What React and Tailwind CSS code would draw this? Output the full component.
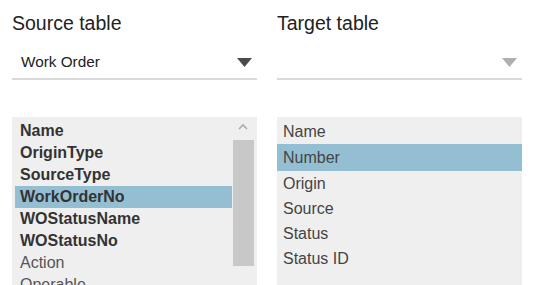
import React from 'react';

const sourceFields = [
  { name: 'Name', bold: true },
  { name: 'OriginType', bold: true },
  { name: 'SourceType', bold: true },
  { name: 'WorkOrderNo', bold: true, selected: true },
  { name: 'WOStatusName', bold: true },
  { name: 'WOStatusNo', bold: true },
  { name: 'Action' },
  { name: 'Operable' },
  { name: 'Priority' },
];

const targetFields = [
  { name: 'Name' },
  { name: 'Number', selected: true },
  { name: 'Origin' },
  { name: 'Source' },
  { name: 'Status' },
  { name: 'Status ID' },
];

function Caret({ light }) {
  return (
    <svg width="15" height="9" viewBox="0 0 15 9" className="shrink-0">
      <polygon points="0,0 15,0 7.5,9" fill={light ? '#b0b0b0' : '#4a4a4a'} />
    </svg>
  );
}

function TableSelect({ label, value, light }) {
  return (
    <div className="flex flex-col w-[245px]">
      <h2 className="text-[19.5px] leading-[22px] text-[#222]">{label}</h2>
      <div className="mt-[12px] h-[34px] flex items-center justify-between pl-[9px] pr-[5px] border-b-2 border-[#d9d9d9]">
        <span className="text-[15.3px] text-[#222]">{value}</span>
        <Caret light={light} />
      </div>
    </div>
  );
}

export default function App() {
  return (
    <div
      className="w-[535px] h-[285px] overflow-hidden bg-white pl-[12px] pt-[12px]"
      style={{ fontFamily: '"Liberation Sans", Arial, sans-serif' }}
    >
      <div className="flex gap-[20px]">
        <TableSelect label="Source table" value="Work Order" />
        <TableSelect label="Target table" value="" light />
      </div>

      <div className="flex gap-[20px] mt-[37px]">
        {/* source fields */}
        <div className="relative w-[245px] h-[180px] bg-[#efefef] pt-[3px] pl-[3px] overflow-hidden">
          {sourceFields.map((f) => (
            <div
              key={f.name}
              className={`h-[22px] w-[217px] flex items-center pl-[5px] text-[16px] ${
                f.bold ? 'font-bold text-[#333]' : 'text-[#555]'
              } ${f.selected ? 'bg-[#94bfd2]' : ''}`}
            >
              {f.name}
            </div>
          ))}
          <div className="absolute top-[6px] right-[9px]">
            <svg width="10" height="7" viewBox="0 0 10 7">
              <polyline points="1,6 5,2 9,6" fill="none" stroke="#aaa" strokeWidth="1.6" />
            </svg>
          </div>
          <div className="absolute top-[23px] right-[3px] w-[21px] h-[126px] bg-[#c8c8c8]" />
        </div>

        {/* target fields */}
        <div className="w-[245px] h-[180px] bg-[#efefef] pt-[2px]">
          {targetFields.map((f) => (
            <div
              key={f.name}
              className={`flex items-center pl-[6px] text-[16px] text-[#444] ${
                f.selected ? 'bg-[#94bfd2] h-[27px]' : 'h-[25px]'
              }`}
            >
              {f.name}
            </div>
          ))}
        </div>
      </div>
    </div>
  );
}
